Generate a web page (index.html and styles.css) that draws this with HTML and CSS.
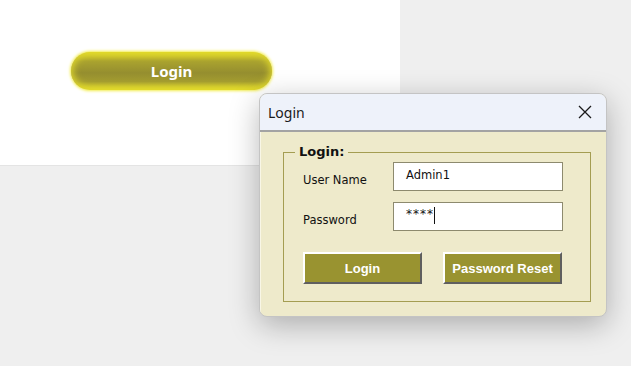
FILE: index.html
```html
<!DOCTYPE html>
<html lang="en">
<head>
<meta charset="UTF-8">
<title>Login</title>
<link rel="stylesheet" href="styles.css">
</head>
<body>

<div class="sheet">
  <div class="pill">Login</div>
</div>

<div class="dialog">
  <div class="titlebar">
    <span class="title">Login</span>
    <svg class="close" width="14" height="14" viewBox="0 0 14 14">
      <path d="M1 1 L13 13 M13 1 L1 13" stroke="#1a1a1a" stroke-width="1.3" fill="none"/>
    </svg>
  </div>
  <div class="body">
    <fieldset class="group">
      <legend>Login:</legend>
      <div class="inner">
        <div class="row first">
          <label>User Name</label>
          <div class="field">Admin1</div>
        </div>
        <div class="row">
          <label>Password</label>
          <div class="field pw">****<span class="caret"></span></div>
        </div>
        <div class="buttons">
          <div class="btn">Login</div>
          <div class="btn">Password Reset</div>
        </div>
      </div>
    </fieldset>
  </div>
</div>

</body>
</html>
```

FILE: styles.css
```css
body {
  margin: 0;
  background-color: #efefef;
  font-family: "DejaVu Sans", Tahoma, sans-serif;
  width: 631px;
  height: 366px;
  overflow: hidden;
}
.sheet {
  width: 400px;
  height: 166px;
  background-color: #fff;
  border-bottom: 1px solid #e4e4e4;
  padding: 52px 0 0 71px;
  box-sizing: border-box;
}
.pill {
  width: 201px;
  height: 38px;
  border-radius: 19px;
  background: linear-gradient(to bottom, #e6de28 0%, #aaa32f 24%, #958e2f 55%, #a39c30 78%, #e8e12a 100%);
  box-shadow: 0 0 3px 1px #f2ec4a, inset 0 0 7px 2px #ddd52c;
  color: #fff;
  font-family: "Noto Sans", sans-serif;
  font-weight: bold;
  font-size: 15px;
  display: flex;
  align-items: center;
  justify-content: center;
}
.dialog {
  position: absolute;
  left: 259px;
  top: 93px;
  width: 348px;
  height: 224px;
  border: 1px solid #c4c4c4;
  border-radius: 8px;
  background-color: #eeeacb;
  box-shadow: 0 8px 30px rgba(0, 0, 0, 0.28);
  box-sizing: border-box;
  overflow: hidden;
  display: flex;
  flex-direction: column;
}
.titlebar {
  height: 36px;
  background-color: #eef2fa;
  border-bottom: 2px solid #a3a3a3;
  display: flex;
  align-items: center;
  justify-content: space-between;
  padding: 0 14px 0 8px;
  flex-shrink: 0;
}
.title {
  font-family: "Noto Sans", sans-serif;
  font-size: 14px;
  color: #1a1a1a;
}
.body {
  flex: 1;
  padding: 14px 15px 14px 22px;
  border-left: 1px solid #f8f6e6;
}
.group {
  margin: 0;
  height: 100%;
  box-sizing: border-box;
  border: 1px solid #a49d52;
  padding: 0;
}
.group legend {
  font-size: 13px;
  font-weight: bold;
  color: #111;
  padding: 0 4px;
  margin-left: 11px;
  line-height: 12px;
}
.inner {
  padding-left: 19px;
}
.row {
  display: flex;
  align-items: center;
  margin-top: 11px;
  height: 29px;
}
.row.first {
  margin-top: 4px;
}
.row label {
  width: 90px;
  font-size: 11.5px;
  color: #111;
  padding-top: 6px;
}
.field {
  width: 170px;
  height: 29px;
  box-sizing: border-box;
  background-color: #fff;
  border: 1px solid #8d8a6e;
  font-size: 11.5px;
  color: #111;
  padding: 5px 0 0 12px;
}
.pw {
  display: flex;
  align-items: flex-start;
  font-size: 12px;
  letter-spacing: 1px;
  padding-top: 4px;
}
.caret {
  width: 1px;
  height: 17px;
  background-color: #111;
  margin-left: 0;
}
.buttons {
  display: flex;
  gap: 21px;
  margin-top: 21px;
}
.btn {
  width: 119px;
  height: 32px;
  box-sizing: border-box;
  background-color: #999330;
  border-top: 2px solid #fff;
  border-left: 2px solid #fff;
  border-right: 2px solid #5f5f5f;
  border-bottom: 2px solid #5f5f5f;
  color: #fff;
  font-family: "Liberation Sans", Arial, sans-serif;
  font-weight: bold;
  font-size: 13px;
  display: flex;
  align-items: center;
  justify-content: center;
}
```
